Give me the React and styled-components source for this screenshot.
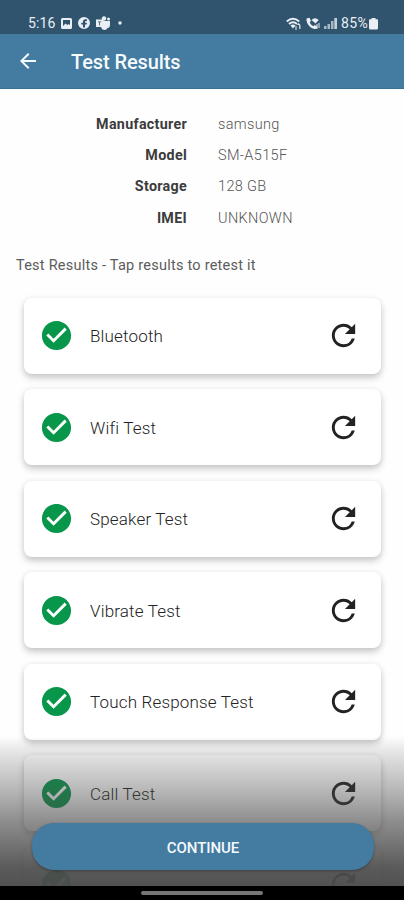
import React from 'react';
import styled, { createGlobalStyle } from 'styled-components';
import { MdArrowBack, MdCheckCircle, MdRefresh } from 'react-icons/md';

const GlobalStyle = createGlobalStyle`
  * { box-sizing: border-box; }
  body { margin: 0; background: #fff; font-family: Roboto, sans-serif; }
`;

const Screen = styled.main`
  position: relative;
  width: 404px;
  height: 900px;
  overflow: hidden;
  background: #fefefe;
`;

const StatusBar = styled.div`
  display: flex;
  justify-content: space-between;
  height: 34px;
  padding: 13px 26px 0 28px;
  background: #30546e;
  color: #e9eff4;
`;

const StatusGroup = styled.div`
  display: flex;
  align-items: center;
  height: 20px;
  gap: ${(p) => p.$gap}px;
`;

const StatusText = styled.span`
  font-size: 14px;
  line-height: 20px;
  letter-spacing: ${(p) => p.$spacing || 0}px;
`;

const StatusIcon = styled.svg`
  display: block;
  flex: none;
  fill: currentColor;
`;

const AppBar = styled.header`
  display: flex;
  align-items: center;
  gap: 31px;
  height: 55px;
  padding: 0 16px;
  background: #437ba1;
  border-bottom: 1px solid #38708f;
  color: #f6fafc;
`;

const Title = styled.h1`
  margin: 2px 0 0;
  font-size: 20px;
  line-height: 24px;
  font-weight: 500;
  letter-spacing: -0.1px;
`;

const Details = styled.dl`
  display: grid;
  grid-template-columns: 187px 1fr;
  grid-auto-rows: 31.4px;
  column-gap: 31px;
  align-items: center;
  margin: 0;
  padding-top: 19px;
  font-size: 14.5px;
`;

const Term = styled.dt`
  text-align: right;
  font-weight: 700;
  font-size: 14.3px;
  letter-spacing: 0.3px;
  color: #3c3c3c;
`;

const Value = styled.dd`
  margin: 1px 0 0;
  font-weight: 300;
  letter-spacing: 0.35px;
  color: #555;
`;

const Hint = styled.p`
  margin: 22px 0 0 16px;
  height: 20px;
  font-size: 14.5px;
  line-height: 20px;
  letter-spacing: 0.24px;
  color: #5c5c5c;
`;

const ResultList = styled.div`
  display: flex;
  flex-direction: column;
  gap: 15.5px;
  padding: 22px 23px 0 24px;
`;

const ResultCard = styled.button`
  display: flex;
  align-items: center;
  flex: none;
  height: 76px;
  padding: 0 20px 0 15px;
  border: 0;
  border-radius: 8px;
  background: #fff;
  box-shadow: 0 4px 7px rgba(0, 0, 0, 0.2), 0 0 6px rgba(0, 0, 0, 0.06);
  font-family: inherit;
  text-align: left;
  color: #222;
`;

const ResultName = styled.span`
  flex: 1;
  margin: 1px 0 0 16px;
  font-size: 17px;
  line-height: 24px;
  font-weight: 300;
  letter-spacing: 0.17px;
  color: #222;
`;

const Passed = styled(MdCheckCircle)`
  flex: none;
  color: #07964a;
`;

const Footer = styled.div`
  position: absolute;
  inset: auto 0 0 0;
  display: flex;
  flex-direction: column;
`;

const Fade = styled.div`
  height: 150px;
  padding: 87px 30px 0 32px;
  background: linear-gradient(
    rgba(72, 72, 72, 0),
    rgba(72, 72, 72, 0.14) 11%,
    rgba(72, 72, 72, 0.41) 38%,
    rgba(72, 72, 72, 0.62) 57%,
    rgba(76, 76, 76, 0.92) 88%,
    rgba(76, 76, 76, 0.97)
  );
`;

const Continue = styled.button`
  display: block;
  width: 100%;
  height: 47px;
  padding: 2px 0 0;
  border: 0;
  border-radius: 22px;
  background: #437ba1;
  box-shadow: 0 1px 3px rgba(0, 0, 0, 0.3);
  color: #f4f9fc;
  font-family: inherit;
  font-size: 15px;
  font-weight: 500;
  letter-spacing: -0.05px;
`;

const NavBar = styled.div`
  display: flex;
  justify-content: center;
  height: 14px;
  padding-top: 5px;
  background: #000;
`;

const Handle = styled.div`
  width: 122px;
  height: 4px;
  border-radius: 2px;
  background: #777;
`;

const details = [
  ['Manufacturer', 'samsung'],
  ['Model', 'SM-A515F'],
  ['Storage', '128 GB'],
  ['IMEI', 'UNKNOWN'],
];

const tests = ['Bluetooth', 'Wifi Test', 'Speaker Test', 'Vibrate Test', 'Touch Response Test', 'Call Test', ''];

function Notifications() {
  return (
    <StatusGroup $gap={6}>
      <StatusText $spacing={0.1}>5:16</StatusText>
      <StatusIcon width="11" height="11" viewBox="0 0 11 11">
        <path fillRule="evenodd" d="M1.5 0h8A1.5 1.5 0 0 1 11 1.5v8A1.5 1.5 0 0 1 9.500 11h-8A1.500 1.500 0 0 1 0 9.500v-8A1.500 1.500 0 0 1 1.500 0zM2 2v6l2.500-2.500 1.800 1.500 1.200-1L9 7V2z" />
      </StatusIcon>
      <StatusIcon width="12" height="12" viewBox="0 0 12 12">
        <path fillRule="evenodd" d="M6 0a6 6 0 1 1 0 12A6 6 0 0 1 6 0zM5 10.500h2V7.400h1.700L9 5.700H7V4.800c0-.6.300-.9 1-.9h1V2.300H7.500C5.700 2.300 5 3.300 5 4.600v1.100H3.300v1.700H5z" />
      </StatusIcon>
      <StatusIcon width="15" height="14" viewBox="0 0 15 14">
        <circle cx="8" cy="2.500" r="2.200" />
        <circle cx="12.500" cy="3" r="1.500" />
        <path fillRule="evenodd" d="M0 3.500h7.500V5H14v4c0 2-1 3-2.500 3-.6 1.300-1.700 2-3 2-1.700 0-3-1-3.500-3H0zM2 5.500v.8h1.200V9.500h.8V6.300h1.200v-.8z" />
      </StatusIcon>
      <StatusIcon width="10" height="14" viewBox="0 0 10 14">
        <circle cx="3" cy="7" r="1.700" />
      </StatusIcon>
    </StatusGroup>
  );
}

function DeviceStatus() {
  return (
    <StatusGroup $gap={4}>
      <StatusIcon width="16" height="13" viewBox="0 0 16 13">
        <g fill="none" stroke="currentColor" strokeWidth="2">
          <path d="M.8 4.500Q7 -1 13.200 4.500" />
          <path d="M3 7Q7 3.500 11 7" />
        </g>
        <path d="M4.500 8.500Q7 6.500 9.500 8.500L7 11.500zM11 8l1.700-2 1.700 2v4h-1.200V8zM9.500 9h1v4h-1z" />
      </StatusIcon>
      <StatusIcon width="14" height="13" viewBox="0 0 14 13">
        <path d="M.5 1.500L3.500.8l1.500 3.200-1.300 1.300c.8 2 2 3.200 3.800 4L8.500 8l2.700 1.500-.5 2.300C5 12.800 0 7 .5 1.500z" />
        <path d="M5.500 3Q9 -.5 12.700 3L9.500 6.500zM10.500 7h1v5h-1zM12.500 6h1v5h-1z" />
      </StatusIcon>
      <StatusIcon width="13" height="12" viewBox="0 0 13 12">
        <path opacity=".65" d="M0 9h2.500v3H0zM3.500 7H6v5H3.500zM7 4h2.500v8H7z" />
        <path opacity=".8" d="M10.300 1H13v11h-2.700z" />
      </StatusIcon>
      <StatusGroup $gap={1}>
        <StatusText $spacing={0.3}>85%</StatusText>
        <StatusIcon width="9" height="13" viewBox="0 0 9 13">
          <path d="M2.500 1h4v1.300H8A1 1 0 0 1 9 3.500V11a1.500 1.500 0 0 1-1.500 1.500h-6A1.500 1.500 0 0 1 0 11V3.500a1 1 0 0 1 1-1.200h1.500z" />
        </StatusIcon>
      </StatusGroup>
    </StatusGroup>
  );
}

export default function App() {
  return (
    <>
      <GlobalStyle />
      <Screen>
        <StatusBar>
          <Notifications />
          <DeviceStatus />
        </StatusBar>
        <AppBar>
          <MdArrowBack size={24} />
          <Title>Test Results</Title>
        </AppBar>
        <Details>
          {details.map(([term, value]) => (
            <React.Fragment key={term}>
              <Term>{term}</Term>
              <Value>{value}</Value>
            </React.Fragment>
          ))}
        </Details>
        <Hint>Test Results - Tap results to retest it</Hint>
        <ResultList>
          {tests.map((name, index) => (
            <ResultCard key={index}>
              <Passed size={35} />
              <ResultName>{name}</ResultName>
              <MdRefresh size={35} />
            </ResultCard>
          ))}
        </ResultList>
        <Footer>
          <Fade>
            <Continue>CONTINUE</Continue>
          </Fade>
          <NavBar>
            <Handle />
          </NavBar>
        </Footer>
      </Screen>
    </>
  );
}
